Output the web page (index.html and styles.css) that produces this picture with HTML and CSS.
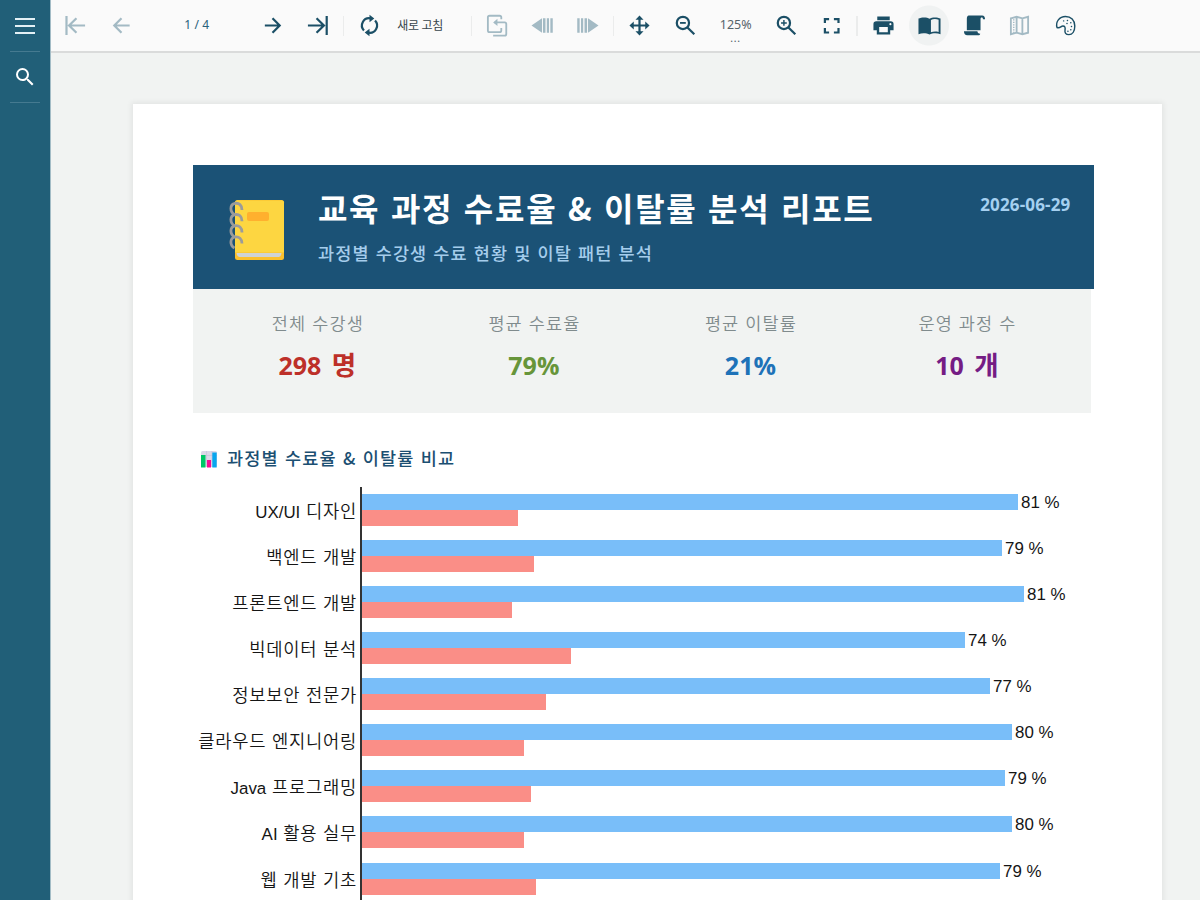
FILE: index.html
```html
<!DOCTYPE html>
<html lang="ko">
<head>
<meta charset="utf-8">
<title>교육 과정 수료율 &amp; 이탈률 분석 리포트</title>
<link rel="stylesheet" href="styles.css">
</head>
<body>
<div class="app">
  <aside class="sidebar">
    <div class="side-item"><svg width="22" height="18" viewBox="0 0 22 18"><path d="M1 2h20M1 9h20M1 16h20" stroke="#e3f0f5" stroke-width="1.8"/></svg></div>
    <div class="side-item"><svg width="24" height="24" viewBox="0 0 24 24"><path fill="#fff" d="M15.5 14h-.79l-.28-.27A6.47 6.47 0 0 0 16 9.5 6.5 6.5 0 1 0 9.5 16c1.61 0 3.09-.59 4.23-1.57l.27.28v.79l5 4.99L20.49 19l-4.99-5zm-6 0C7.01 14 5 11.99 5 9.5S7.01 5 9.5 5 14 7.01 14 9.5 11.99 14 9.5 14z"/></svg></div>
  </aside>
  <div class="main">
    <header class="toolbar">
      <span class="tool off"><svg viewBox="0 0 24 24"><path class="ln" d="M2.6 2v20M22 12H5.5M13 4.5L5.3 12l7.7 7.5"/></svg></span>
      <span class="tool off"><svg viewBox="0 0 24 24"><path class="ln" d="M20.500 12H4.800M12 4.500L4.500 12l7.500 7.500"/></svg></span>
      <span class="page-no">1 / 4</span>
      <span class="tool"><svg viewBox="0 0 24 24"><path class="ln" d="M4 12h15.200M12 4.500l7.500 7.500-7.500 7.500"/></svg></span>
      <span class="tool"><svg viewBox="0 0 24 24"><path class="ln" d="M21.600 2v20M2 12h16.500M11 4.500l7.700 7.500-7.700 7.500"/></svg></span>
      <i class="sep"></i>
      <span class="tool"><svg viewBox="0 0 24 24"><path class="ln" d="M6.200 17.200A7.600 7.600 0 0 1 13 4.500M17.800 6.800A7.600 7.600 0 0 1 11 19.500"/><path d="M12 .700l5 3.900-5 3.900zM12 15.500l-5 3.900 5 3.900z"/></svg></span>
      <span class="refresh-text">새로 고침</span>
      <i class="sep"></i>
      <span class="tool off"><svg viewBox="0 0 24 24"><path class="thin" d="M17 5.500V3.500Q17 1.800 15.300 1.800H4.700Q3 1.800 3 3.500v13.800Q3 19 4.700 19h10.600Q17 19 17 17.300v-2.800M10 8.800h10.500Q22.200 8.800 22.200 10.500v10.300Q22.200 22.500 20.500 22.500H8.500"/><path d="M13 5v7.600L8.500 8.800z"/></svg></span>
      <span class="tool off"><svg viewBox="0 0 24 24"><path d="M.500 12L11.500 4.500v15zM12.500 4.500h2.600v15h-2.600zM16.500 4.500h2.300v15h-2.300zM20.200 4.500h2.500v15h-2.500z"/></svg></span>
      <span class="tool off"><svg viewBox="0 0 24 24"><path d="M23.500 12L12.500 4.500v15zM8.900 4.500h2.600v15H8.900zM5.200 4.500h2.300v15H5.200zM1.300 4.500h2.500v15H1.300z"/></svg></span>
      <i class="sep"></i>
      <span class="tool"><svg viewBox="0 0 24 24"><path class="ln" d="M12 4v16M4 12h16"/><path d="M12 1.500l4.200 4.500H7.800zM12 22.500L7.800 18h8.400zM1.500 12L6 7.800v8.400zM22.500 12L18 16.200V7.800z"/></svg></span>
      <span class="tool"><svg viewBox="0 0 24 24"><circle class="ln" cx="9.300" cy="9.300" r="6.400"/><path class="ln" d="M14 14l7.200 7.200"/><path class="thin" d="M6.300 9.300h6"/></svg></span>
      <span class="zoom-text"><span>125%</span><b>...</b></span>
      <span class="tool"><svg viewBox="0 0 24 24"><circle class="ln" cx="9.300" cy="9.300" r="6.400"/><path class="ln" d="M14 14l7.200 7.200"/><path class="hair" d="M6.300 9.300h6M9.300 6.300v6"/></svg></span>
      <span class="tool"><svg viewBox="0 0 24 24"><path class="ln" d="M5.100 9.500V5.400H9.500M14.500 5.400h4.800V9.500M19.300 14.500v4.800H14.500M9.500 19.300H5.100V14.500"/></svg></span>
      <i class="sep"></i>
      <span class="tool"><svg viewBox="0 0 24 24"><path d="M5.500 2.500h13v4h-13zM19.500 7.500h-15a3 3 0 0 0-3 3V17H5v4.500h14V17h3.500v-6.500a3 3 0 0 0-3-3zM16.500 19h-9v-5.500h9zm2.700-7.300a1.100 1.100 0 1 1 0-2.200 1.100 1.100 0 0 1 0 2.200z"/></svg></span>
      <span class="tool active"><svg viewBox="0 0 24 24"><path fill-rule="evenodd" d="M12 5C9.500 3.200 4 3 .500 4.800V21c3.500-1.300 8.500-1.300 11.500.500 3-1.800 8-1.800 11.500-.500V4.800C20 3 14.500 3.200 12 5zm9.500 13.700c-2.700-.7-5.600-.6-8 .300V6.300c2-1.300 5.500-1.400 8-.300z"/></svg></span>
      <span class="tool"><svg viewBox="0 0 24 24"><path d="M6 1.500h14c2 0 3 1.500 3 4h-2.200c0-1.200-.3-1.800-1.300-1.800-.8 0-1.200.6-1.200 1.800V17H4V5c0-2.200.7-3.500 2-3.500zM1 18h14c.2 1.500 1 2.300 3 2.600-.3 1.300-1 1.700-2 1.700H4.500C2.300 22.300 1 20.600 1 18z"/></svg></span>
      <span class="tool off"><svg viewBox="0 0 24 24"><path class="thin" d="M3 4.500l6-1.600 6 1.600 6-1.600v16.600l-6 1.600-6-1.600-6 1.600zM9 3v16.500M15 4.500V21"/><path class="dot" d="M6 5.500v14"/></svg></span>
      <span class="tool"><svg viewBox="0 0 24 24"><path class="hair" d="M3.200 14.200C1.300 8.200 5.700 2.600 12 2.600c5.700 0 9.700 3.900 9.700 9.900 0 5.500-2.600 9-6.200 9-3.300 0-4.500-2-4-4.700.5-2.800-.2-4.300-2.200-4.300-2.200 0-2.800 2.800-6.100 1.700z"/><path class="dots" d="M10 7.200h.1M14 6.700h.1M17.500 9.200h.1M18.200 13h.1M17.500 16.500h.1M13.500 10h.1M14.500 18h.1"/></svg></span>
    </header>
    <main class="viewer">
      <article class="paper">
        <section class="banner">
          <svg class="book" width="56" height="62" viewBox="0 0 56 62">
            <rect x="6" y="1" width="49" height="60" rx="2.500" fill="#fbc02d"/>
            <path d="M6 3.500Q6 1.500 8 1.500h45q2 0 2 2v50H6z" fill="#fdd641"/>
            <path d="M7.500 54h45q-.5 4-3 4H11q-3 0-3.500-4z" fill="#cfd3d6"/>
            <rect x="18" y="13" width="22" height="9" rx="2" fill="#ffb02e"/>
            <g fill="none" stroke="#9b9b9b" stroke-width="2.800"><path id="ring" d="M5.500 15.500C.800 13 .500 5.500 6 4.400c4-.7 7 1.700 7 6.600"/><use href="#ring" y="11.200"/><use href="#ring" y="22.400"/><use href="#ring" y="33.600"/></g>
          </svg>
          <div class="banner-text">
            <h1>교육 과정 수료율 &amp; 이탈률 분석 리포트</h1>
            <p>과정별 수강생 수료 현황 및 이탈 패턴 분석</p>
          </div>
          <time class="date">2026-06-29</time>
        </section>
        <section class="kpis">
          <div class="kpi"><span>전체 수강생</span><strong class="red">298 <em>명</em></strong></div>
          <div class="kpi"><span>평균 수료율</span><strong class="green">79%</strong></div>
          <div class="kpi"><span>평균 이탈률</span><strong class="blue">21%</strong></div>
          <div class="kpi"><span>운영 과정 수</span><strong class="purple">10 <em>개</em></strong></div>
        </section>
        <h2><svg width="18" height="18" viewBox="0 0 18 18"><rect x="1" y="1" width="16" height="16" rx="1.500" fill="#dcd8e8"/><path d="M1 5.500h16M1 11h16M6.500 1v16M12 1v16" stroke="#c5bfd8" stroke-width=".6"/><rect x="1" y="5" width="4.500" height="12.500" fill="#00c766"/><rect x="7" y="10" width="4" height="7.500" fill="#f90c93"/><rect x="12.300" y="2.500" width="4.400" height="15" fill="#08a6ee"/></svg><span>과정별 수료율 &amp; 이탈률 비교</span></h2>
        <section class="chart">
          <div class="row"><span class="name"><span class="latin">UX/UI</span> 디자인</span><div class="bars"><div class="done"><i style="width:656px"></i><b>81 %</b></div><div class="drop" style="width:156px"></div></div></div>
          <div class="row"><span class="name">백엔드 개발</span><div class="bars"><div class="done"><i style="width:640px"></i><b>79 %</b></div><div class="drop" style="width:172px"></div></div></div>
          <div class="row"><span class="name">프론트엔드 개발</span><div class="bars"><div class="done"><i style="width:662px"></i><b>81 %</b></div><div class="drop" style="width:150px"></div></div></div>
          <div class="row"><span class="name">빅데이터 분석</span><div class="bars"><div class="done"><i style="width:603px"></i><b>74 %</b></div><div class="drop" style="width:209px"></div></div></div>
          <div class="row"><span class="name">정보보안 전문가</span><div class="bars"><div class="done"><i style="width:628px"></i><b>77 %</b></div><div class="drop" style="width:184px"></div></div></div>
          <div class="row"><span class="name">클라우드 엔지니어링</span><div class="bars"><div class="done"><i style="width:650px"></i><b>80 %</b></div><div class="drop" style="width:162px"></div></div></div>
          <div class="row"><span class="name"><span class="latin">Java</span> 프로그래밍</span><div class="bars"><div class="done"><i style="width:643px"></i><b>79 %</b></div><div class="drop" style="width:169px"></div></div></div>
          <div class="row"><span class="name"><span class="latin">AI</span> 활용 실무</span><div class="bars"><div class="done"><i style="width:650px"></i><b>80 %</b></div><div class="drop" style="width:162px"></div></div></div>
          <div class="row"><span class="name">웹 개발 기초</span><div class="bars"><div class="done"><i style="width:638px"></i><b>79 %</b></div><div class="drop" style="width:174px"></div></div></div>
        </section>
      </article>
    </main>
  </div>
</div>
</body>
</html>
```
FILE: styles.css
```css
* { box-sizing: border-box; }
body { margin: 0; font-family: "Noto Sans", "Noto Sans CJK KR", sans-serif; }
.app { display: flex; width: 1200px; height: 900px; overflow: hidden; background: #f1f3f2; }
.sidebar { width: 50px; flex: none; background: #215f78; }
.side-item { width: 30px; height: 51px; margin-left: 10px; display: flex; align-items: center; justify-content: center; border-bottom: 1px solid #457a90; }
.side-item:first-child { height: 52px; }
.main { flex: 1; min-width: 0; display: flex; flex-direction: column; border-left: 1px solid #a3bcc6; }
.toolbar { height: 53px; flex: none; padding: 0 0 0 2.300px; display: flex; align-items: center; background: #fafafa; border-bottom: 2px solid #dadbdb; }
.tool { width: 45.400px; height: 41px; flex: none; display: flex; align-items: center; justify-content: center; color: #1b4f66; }
.tool svg { width: 23px; height: 23px; fill: currentColor; }
.tool .ln { fill: none; stroke: currentColor; stroke-width: 2.300; }
.tool .thin { fill: none; stroke: currentColor; stroke-width: 1.900; }
.tool .hair { fill: none; stroke: currentColor; stroke-width: 1.500; }
.tool .dot { fill: none; stroke: currentColor; stroke-width: 1.500; stroke-dasharray: 1.200 1.400; }
.tool .dots { stroke: currentColor; stroke-width: 1.500; stroke-linecap: round; }
.tool.off { color: #a3bac4; }
.active { background: radial-gradient(circle, #f0f2f2 19.500px, transparent 20.500px); }
.sep { width: 6.500px; height: 20px; flex: none; background: linear-gradient(90deg, transparent 2.500px, #ebecec 2.500px, #ebecec 4px, transparent 4px); }
.page-no { width: 105.500px; flex: none; padding-bottom: 2px; text-align: center; font-size: 12px; color: #28617b; letter-spacing: .1px; }
.refresh-text { width: 75.500px; flex: none; padding: 0 0 2px 5px; font: 12px "Noto Sans CJK KR", sans-serif; color: #37454c; white-space: nowrap; letter-spacing: -.4px; }
.zoom-text { width: 56px; height: 41px; flex: none; padding-top: 11px; display: flex; flex-direction: column; align-items: center; font-size: 12.500px; line-height: 17px; color: #56646b; }
.zoom-text b { line-height: 11px; font-size: 8px; letter-spacing: 1.200px; }
.viewer { flex: 1; padding: 51px 0 0 82px; }
.paper { width: 1029px; height: 820px; padding: 61px 0 0 60.400px; background: #fff; box-shadow: 0 0 5px 2px rgba(0, 0, 0, .055); }
.banner { width: 900.500px; height: 124px; display: flex; background: #1b5276; }
.book { margin: 33.500px 0 0 35.600px; flex: none; }
.banner-text { margin-left: 33px; padding-top: 20px; font-family: "Noto Sans CJK KR", sans-serif; white-space: nowrap; flex: 1; }
h1 { margin: 0; font-size: 32px; line-height: 44px; font-weight: 700; color: #fff; letter-spacing: 1.700px; }
.banner p { margin: 11px 0 0; font-size: 17.500px; line-height: 26px; font-weight: 500; color: #a5cdec; letter-spacing: 1.120px; }
.date { margin: 28px 23.500px 0 0; font: 700 17px/24px "Open Sans", sans-serif; color: #a5d0f0; letter-spacing: .150px; }
.kpis { width: 897.500px; height: 123.500px; padding: 21px 15.700px 0; display: grid; grid-template-columns: repeat(4, 1fr); background: #f1f3f2; }
.kpi { text-align: center; font-family: "Open Sans", "Noto Sans CJK KR", sans-serif; }
.kpi span { display: block; padding-left: 1px; font: 350 17.500px/26px "Noto Sans CJK KR", sans-serif; color: #808b8d; letter-spacing: 1.100px; }
.kpi strong { display: block; margin-top: 12px; font-size: 25px; line-height: 34px; word-spacing: 4px; }
.kpi em { font-style: normal; font-size: 26.500px; line-height: 30px; }
.red { color: #bd3029; }
.green { color: #67953a; }
.blue { color: #1e72b8; }
.purple { color: #751c84; }
h2 { margin: 31px 0 16px 6.600px; height: 27px; display: flex; align-items: center; gap: 9px; font: 500 17.500px/27px "Noto Sans CJK KR", sans-serif; color: #1b4f72; letter-spacing: 1.200px; }
h2 svg { margin-top: 3px; }
.chart { margin-left: .700px; font-family: "Liberation Sans", "Noto Sans CJK KR", sans-serif; color: #151515; }
.row { height: 46.130px; display: flex; }
.name { width: 163px; margin-right: 3px; text-align: right; font-family: "Noto Sans CJK KR", sans-serif; font-size: 17.700px; line-height: 47px; font-weight: 350; letter-spacing: .750px; white-space: nowrap; }
.latin { font: 400 16.900px "Liberation Sans", sans-serif; letter-spacing: 0; }
.bars { border-left: 2px solid #333; padding-top: 7px; }
.done { height: 16px; display: flex; align-items: center; }
.done i { height: 16px; background: #79bef9; }
.done b { margin-left: 3px; padding-top: 2px; font-weight: 400; font-size: 16.900px; line-height: 18px; white-space: nowrap; }
.drop { height: 16px; background: #fa8e87; }
```
